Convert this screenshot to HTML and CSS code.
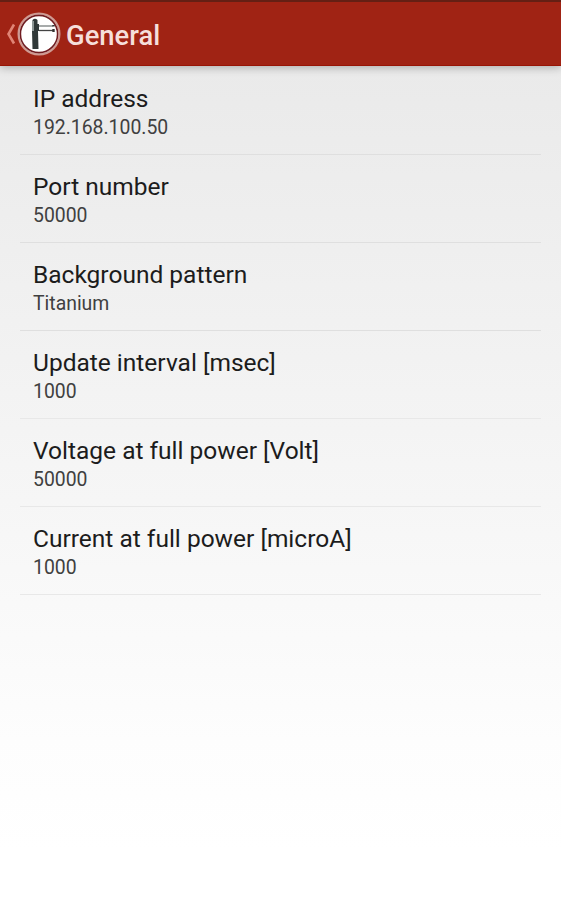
FILE: index.html
```
<!DOCTYPE html>
<html lang="en">
<head>
<meta charset="utf-8">
<title>General</title>
<link rel="stylesheet" href="styles.css">
</head>
<body>
<header class="bar">
<svg class="back" width="12" height="24" viewBox="0 0 12 24"><path d="M10 2.5 L4.5 12 L10 21.5" fill="none" stroke="#e08475" stroke-width="2.6"/></svg>
<svg class="logo" width="44" height="44" viewBox="0 0 44 44"><circle cx="22" cy="22" r="20.5" fill="#fff" stroke="#cf9a92" stroke-width="2"/><circle cx="22" cy="22" r="18.6" fill="#fff" stroke="#701c20" stroke-width="1.6"/><path d="M15.5 8q2.5-2.5 5 0v4h1.500v7h-1l.5 18h-6l-.5-18z" fill="#303838"/><path d="M16 9v10" stroke="#8d9695" stroke-width="2"/><path d="M22 14h14" stroke="#777e7d" stroke-width="1.3"/><path d="M22 18.500h15" stroke="#444" stroke-width="1.3"/><path d="M36.500 13v1.500M36.500 17v3" stroke="#333" stroke-width="2.400"/></svg>
<h1>General</h1>
</header>
<main class="list">
<section class="row"><h2>IP address</h2><p>192.168.100.50</p></section>
<section class="row"><h2>Port number</h2><p>50000</p></section>
<section class="row"><h2>Background pattern</h2><p>Titanium</p></section>
<section class="row"><h2>Update interval [msec]</h2><p>1000</p></section>
<section class="row"><h2>Voltage at full power [Volt]</h2><p>50000</p></section>
<section class="row"><h2>Current at full power [microA]</h2><p>1000</p></section>
</main>
</body>
</html>
```
FILE: styles.css
```
* { box-sizing: border-box; margin: 0; }
body { height: 900px; overflow: hidden; font-family: Roboto, sans-serif; color: #1c1c1c; background: linear-gradient(#eaeaea 66px, #efefef 250px, #f6f6f6 500px, #fdfdfd 740px, #fff 850px); }
.bar { height: 66px; padding: 0 0 0 4px; display: flex; align-items: center; background: #a02314; border-top: 2px solid #651f14; border-bottom: 1px solid #981405; box-shadow: 0 2px 8px rgba(0,0,0,.25); }
.logo { margin-left: 1px; }
h1 { margin: 4px 0 0 5px; color: #f6dfdb; font-size: 27.4px; line-height: 32px; font-weight: 500; }
.list { padding: 1px 20px 0; }
.row { height: 88px; padding: 17px 13px 0; border-bottom: 1px solid #dfdfdf; }
.row:nth-child(n+4) { border-color: #e8e8e8; }
h2 { font-size: 24.5px; line-height: 30px; font-weight: 400; }
p { font-size: 19.4px; line-height: 28px; color: #404040; }
```
